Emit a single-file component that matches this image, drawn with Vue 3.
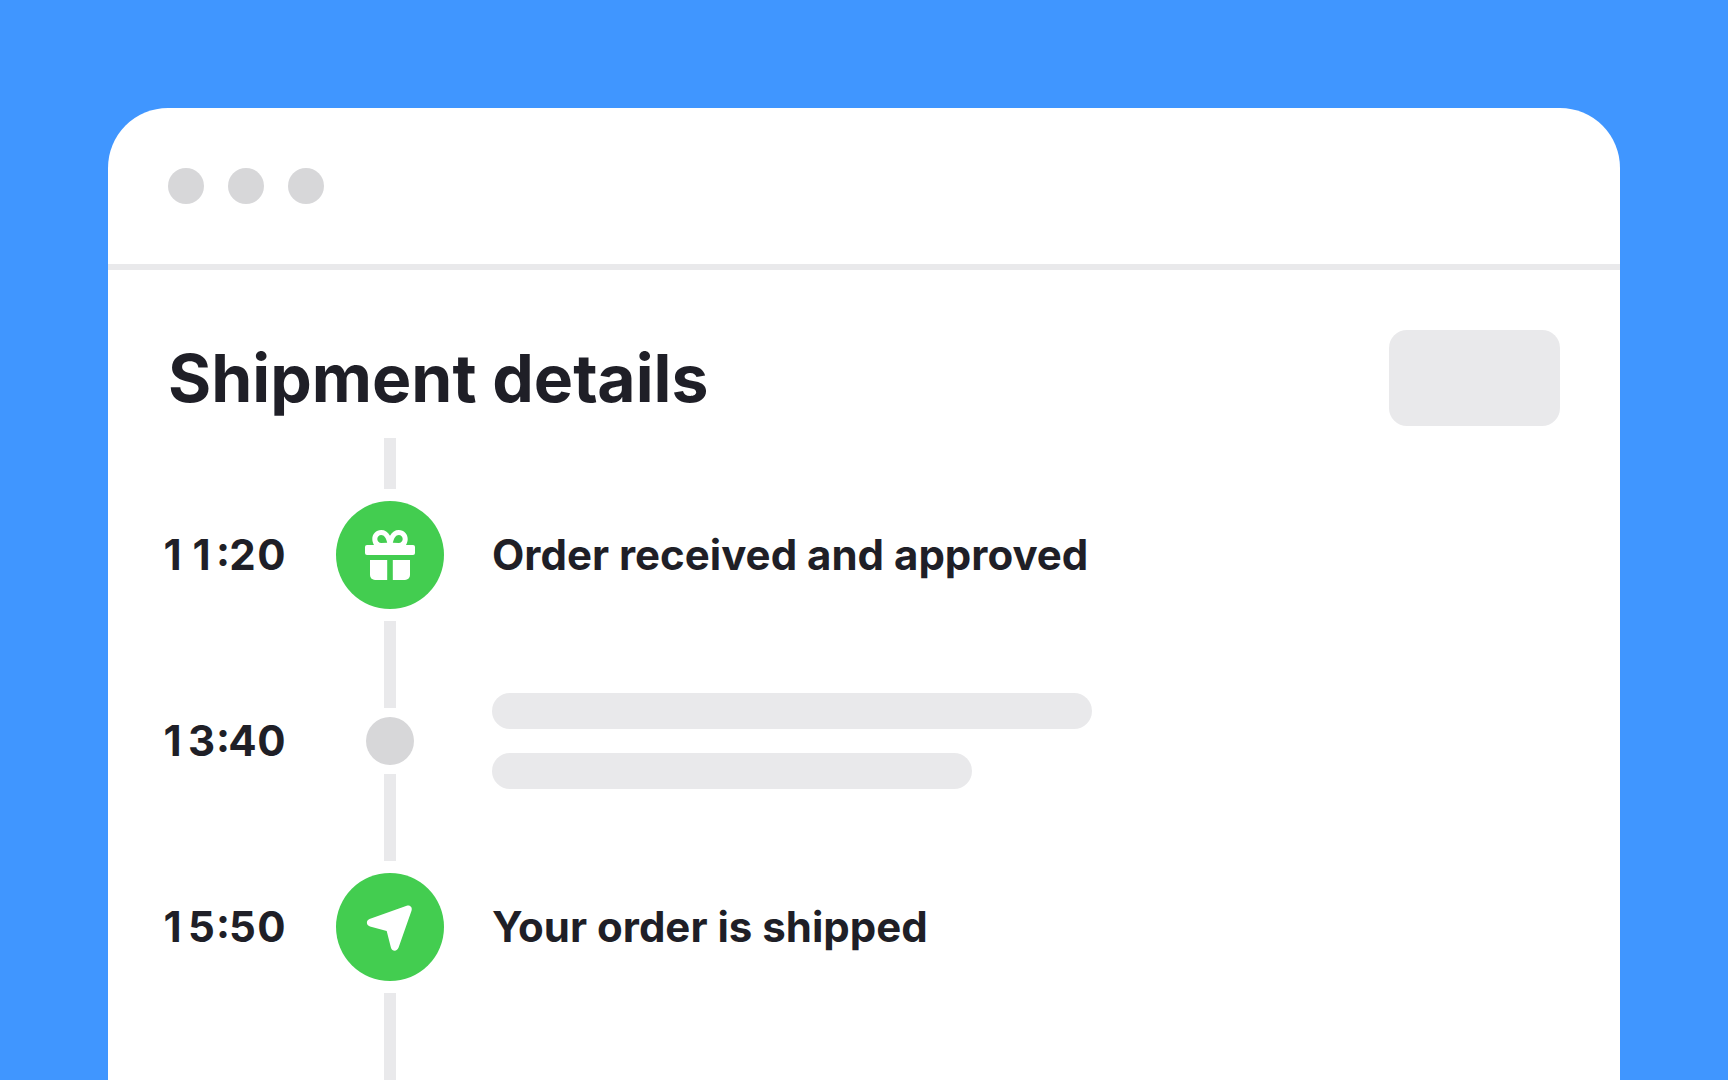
<script setup>
const events = [
  { time: '11:20', title: 'Order received and approved', icon: 'gift' },
  { time: '13:40', title: '', icon: '' },
  { time: '15:50', title: 'Your order is shipped', icon: 'send' },
]
</script>

<template>
  <div class="page">
    <main class="window">
      <header class="titlebar">
        <span v-for="n in 3" :key="n" class="light"></span>
      </header>

      <div class="heading">
        <h1>Shipment details</h1>
        <button type="button" class="action" aria-label="Action"></button>
      </div>

      <div class="lead"><span class="line"></span></div>

      <ol class="timeline">
        <li v-for="event in events" :key="event.time" class="event">
          <!-- Each character gets its own cell so the digits line up between rows. -->
          <time class="time" :datetime="event.time"
            ><span
              v-for="(char, i) in event.time"
              :key="i"
              :class="char === ':' ? 'colon' : 'digit'"
              >{{ char }}</span
            ></time
          >

          <div class="rail">
            <span class="line"></span>
            <span v-if="event.icon" class="badge">
              <svg v-if="event.icon === 'gift'" viewBox="0 0 108 108" aria-hidden="true">
                <g transform="translate(29 29)" fill="#fff">
                  <rect y="15" width="50" height="10" rx="2" />
                  <path d="M5 30h17.200v20H10a5 5 0 0 1-5-5z" />
                  <path d="M27.800 30H45v15a5 5 0 0 1-5 5H27.800z" />
                  <path
                    fill-rule="evenodd"
                    d="M9.300 15.500C8 13.500 7.300 11.200 7.300 9C7.300 4 11 0 16.200 0C20 0 22.800 2 25 5.800C27.200 2 30 0 33.800 0C39 0 42.700 4 42.700 9C42.700 11.200 42 13.500 40.700 15.500ZM22.200 12.800C21.200 8.200 19.200 5 16.200 5C14 5 12.300 6.700 12.300 9C12.300 11.300 14 12.900 16.200 13ZM27.800 12.800L33.800 13C36 12.900 37.700 11.300 37.700 9C37.700 6.700 36 5 33.800 5C30.800 5 28.800 8.200 27.800 12.800Z"
                  />
                </g>
              </svg>
              <svg v-else viewBox="0 0 108 108" aria-hidden="true">
                <path
                  fill="#fff"
                  d="M33.500 46L70.700 32.800C74 31.600 76.700 34.400 75.500 37.700L62.600 74.600C61.200 78.800 56 78.700 54.900 74.500L50.700 58L34 53.400C30 52.300 30 47.300 33.500 46Z"
                />
              </svg>
            </span>
            <span v-else class="dot"></span>
            <span class="line"></span>
          </div>

          <h2 v-if="event.title">{{ event.title }}</h2>
          <div v-else class="skeleton">
            <span class="bar"></span>
            <span class="bar short"></span>
          </div>
        </li>
      </ol>

      <div class="lead tail"><span class="line"></span></div>
    </main>
  </div>
</template>

<style>
body {
  margin: 0;
  background: #4096ff;
}
</style>

<style scoped>
.page {
  box-sizing: border-box;
  display: flex;
  min-height: 100vh;
  padding: 108px 108px 0;
  background: #4096ff;
  color: #1f1f27;
  font-family: Inter, "Liberation Sans", sans-serif;
}

.window {
  flex: 1;
  min-width: 0;
  display: flex;
  flex-direction: column;
  border-radius: 60px 60px 0 0;
  background: #fff;
}

.titlebar {
  display: flex;
  gap: 24px;
  padding: 60px;
  border-bottom: 6px solid #e9e9eb;
}

.light {
  width: 36px;
  height: 36px;
  border-radius: 50%;
  background: #d7d7d9;
}

.heading {
  display: flex;
  align-items: center;
  justify-content: space-between;
  padding: 60px 60px 12px;
}

h1,
h2 {
  margin: 0;
  font-weight: 700;
}

h1 {
  font-size: 66px;
  line-height: 96px;
  font-kerning: none;
}

h2,
.time {
  font-size: 42px;
  line-height: 60px;
}

.action {
  width: 171px;
  height: 96px;
  padding: 0;
  border: 0;
  border-radius: 18px;
  background: #e9e9eb;
}

.timeline {
  margin: 0;
  padding: 0;
  list-style: none;
}

.event {
  display: grid;
  grid-template-columns: 228px 108px 1fr;
  align-items: center;
  min-height: 186px;
}

.time {
  padding-left: 50px;
  font-weight: 700;
  font-feature-settings: "case";
}

.digit,
.colon {
  display: inline-block;
  width: 29px;
  text-align: center;
}

.colon {
  width: 12px;
}

.rail {
  display: flex;
  flex-direction: column;
  align-items: center;
  align-self: stretch;
}

.line {
  flex: 1;
  width: 12px;
  background: #e9e9eb;
}

.badge {
  width: 108px;
  height: 108px;
  margin: 12px 0;
  border-radius: 50%;
  background: #43cd50;
}

.badge svg {
  display: block;
}

.dot {
  width: 48px;
  height: 48px;
  margin: 9px 0;
  border-radius: 50%;
  background: #d7d7d9;
}

.event h2,
.skeleton {
  margin-left: 48px;
}

.skeleton {
  display: flex;
  flex-direction: column;
  gap: 24px;
}

.bar {
  width: 600px;
  height: 36px;
  border-radius: 18px;
  background: #e9e9eb;
}

.bar.short {
  width: 480px;
}

.lead {
  display: flex;
  flex-direction: column;
  align-items: center;
  width: 108px;
  height: 24px;
  margin-left: 228px;
}

.tail {
  flex: 1;
  height: auto;
}
</style>
